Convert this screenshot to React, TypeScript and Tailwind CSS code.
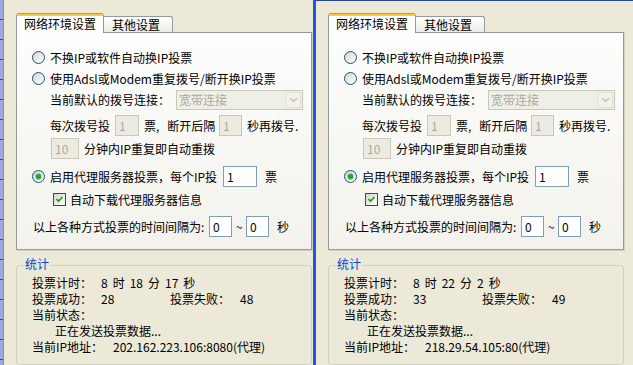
import React from 'react';

type Tongji = { shi: string; fen: string; miao: string; ok: string; fail: string; ip: string };

const ZUO: Tongji = { shi: '8', fen: '18', miao: '17', ok: '28', fail: '48', ip: '202.162.223.106:8080(代理)' };
const YOU: Tongji = { shi: '8', fen: '22', miao: '2', ok: '33', fail: '49', ip: '218.29.54.105:80(代理)' };

function Radio({ checked }: { checked?: boolean }) {
  return (
    <span className="flex h-[13px] w-[13px] shrink-0 items-center justify-center rounded-full border border-[#1c5180] bg-linear-to-br from-[#d6d5cc] to-white">
      {checked && <span className="h-[5px] w-[5px] rounded-full bg-[#2aa12a] shadow-[0_0_1px_1px_#8ad98a]" />}
    </span>
  );
}

function Check() {
  return (
    <span className="flex h-[13px] w-[13px] shrink-0 items-center justify-center border border-[#1c5180] bg-linear-to-br from-[#d6d5cc] to-white">
      <svg width="9" height="9" viewBox="0 0 9 9">
        <polyline points="1.5,4 3.5,6.2 7.5,2" fill="none" stroke="#21a121" strokeWidth="1.8" />
      </svg>
    </span>
  );
}

// 文本框：disabled 时灰底灰字
function Kuang({ value, disabled, className }: { value: string; disabled?: boolean; className: string }) {
  return (
    <span
      className={
        (disabled
          ? 'border-[#c9c7ba] bg-[#ecebe2] text-[#aca899] '
          : 'border-[#7f9db9] bg-white text-black ') +
        'flex h-[21px] shrink-0 items-center border pl-[3px] ' +
        className
      }
    >
      {value}
    </span>
  );
}

function Tabs() {
  return (
    <div className="relative z-10 flex h-[19px] items-end">
      <div className="-mb-px flex h-[20px] w-[88px] flex-col rounded-t-[3px] border-x border-t border-x-[#919b9c] border-t-[#e68b2c] bg-white">
        <div className="h-[2px] bg-[#ffc83c]" />
        <div className="flex flex-1 items-center pb-[2px] pl-[7px]">网络环境设置</div>
      </div>
      <div className="flex h-[16px] w-[69px] items-center rounded-tr-[3px] border-r border-t border-[#919b9c] bg-linear-to-b from-white to-[#ecebe6] pl-[8px] pt-px">
        其他设置
      </div>
    </div>
  );
}

function Shezhi() {
  return (
    <div className="flex w-[296px] flex-col border border-[#919b9c] bg-linear-to-b from-[#fdfdfc] to-[#f3f2ec] pb-[12px] pt-[14px] shadow-[1px_1px_0_#d3d0c4]">
      <div className="flex h-[21px] items-center gap-[5px] pl-[15px]">
        <Radio />
        <span>不换IP或软件自动换IP投票</span>
      </div>
      <div className="flex h-[21px] items-center gap-[5px] pl-[15px]">
        <Radio />
        <span>使用Adsl或Modem重复拨号/断开换IP投票</span>
      </div>
      <div className="flex h-[21px] items-center pl-[33px]">
        <span className="w-[126px]">当前默认的拨号连接：</span>
        <span className="flex h-[20px] w-[127px] items-center border border-[#c9c7ba] bg-[#efeee7]">
          <span className="flex-1 pl-[2px] text-[#aca899]">宽带连接</span>
          <span className="mr-px flex h-[16px] w-[16px] items-center justify-center rounded-[2px] bg-[#f2f1ea] shadow-[inset_0_0_0_1px_#e3e1d6]">
            <svg width="9" height="6" viewBox="0 0 9 6">
              <polyline points="1,1 4.5,4.5 8,1" fill="none" stroke="#c9c7ba" strokeWidth="1.6" />
            </svg>
          </span>
        </span>
      </div>
      <div className="mt-[5px] flex h-[21px] items-center pl-[33px]">
        <span className="w-[65px]">每次拨号投</span>
        <Kuang value="1" disabled className="w-[24px]" />
        <span className="ml-[5px] flex w-[75px]">
          <span>票,</span>
          <span className="ml-[8px]">断开后隔</span>
        </span>
        <Kuang value="1" disabled className="w-[23px]" />
        <span className="ml-[5px]">秒再拨号.</span>
      </div>
      <div className="mt-[2px] flex h-[21px] items-center gap-[5px] pl-[34px]">
        <Kuang value="10" disabled className="w-[28px]" />
        <span>分钟内IP重复即自动重拨</span>
      </div>
      <div className="mt-[7px] flex h-[21px] items-center pl-[15px]">
        <Radio checked />
        <span className="ml-[5px] w-[173px]">启用代理服务器投票，每个IP投</span>
        <Kuang value="1" className="w-[34px]" />
        <span className="ml-[8px]">票</span>
      </div>
      <div className="mt-[2px] flex h-[21px] items-center gap-[4px] pl-[36px]">
        <Check />
        <span>自动下载代理服务器信息</span>
      </div>
      <div className="mt-[6px] flex h-[21px] items-center pl-[16px]">
        <span className="w-[176px]">以上各种方式投票的时间间隔为:</span>
        <Kuang value="0" className="w-[23px]" />
        <span className="w-[14px] text-center">~</span>
        <Kuang value="0" className="w-[23px]" />
        <span className="ml-[8px]">秒</span>
      </div>
    </div>
  );
}

function TongjiKuang({ d }: { d: Tongji }) {
  return (
    <div className="relative mt-[15px] h-[110px] w-[296px] rounded-[3px] border border-[#d0d0bf] pl-[15px] pt-[9px]">
      <span className="absolute left-[7px] top-[-8px] bg-[#ece9d8] px-px leading-[12px] text-[#0046d5]">统计</span>
      <div className="flex h-[16px] items-center">
        <span className="w-[69px]">投票计时：</span>
        <span className="flex gap-[5px]">
          <span>{d.shi}</span>
          <span>时</span>
          <span>{d.fen}</span>
          <span>分</span>
          <span>{d.miao}</span>
          <span>秒</span>
        </span>
      </div>
      <div className="flex h-[16px] items-center">
        <span className="w-[69px]">投票成功：</span>
        <span className="w-[69px]">{d.ok}</span>
        <span className="w-[70px]">投票失败：</span>
        <span>{d.fail}</span>
      </div>
      <div className="flex h-[16px] items-center">当前状态：</div>
      <div className="flex h-[16px] items-center pl-[23px]">正在发送投票数据...</div>
      <div className="flex h-[16px] items-center">
        <span className="w-[81px]">当前IP地址：</span>
        <span>{d.ip}</span>
      </div>
    </div>
  );
}

function Mianban({ d, className }: { d: Tongji; className: string }) {
  return (
    <div className={'flex shrink-0 flex-col pl-[12px] ' + className}>
      <Tabs />
      <Shezhi />
      <TongjiKuang d={d} />
    </div>
  );
}

export default function App() {
  return (
    <div className="flex h-[365px] w-[633px] overflow-hidden bg-[#ece9d8] font-['Noto_Sans_CJK_SC',sans-serif] text-[12px] leading-[12px] text-black">
      <div className="flex w-[4px] shrink-0">
        <div className="w-[3px] bg-[repeating-linear-gradient(to_bottom,#9ea8dc_0px,#9ea8dc_19px,#4a4c6a_19px,#4a4c6a_20px)]" />
        <div className="w-px bg-[#8c8c9c]" />
      </div>
      <Mianban d={ZUO} className="w-[309px] pt-[13px]" />
      <div className="w-[3px] shrink-0 bg-[#2158d8]" />
      <Mianban d={YOU} className="w-[317px] border-t border-[#29479f] pt-[12px]" />
    </div>
  );
}
